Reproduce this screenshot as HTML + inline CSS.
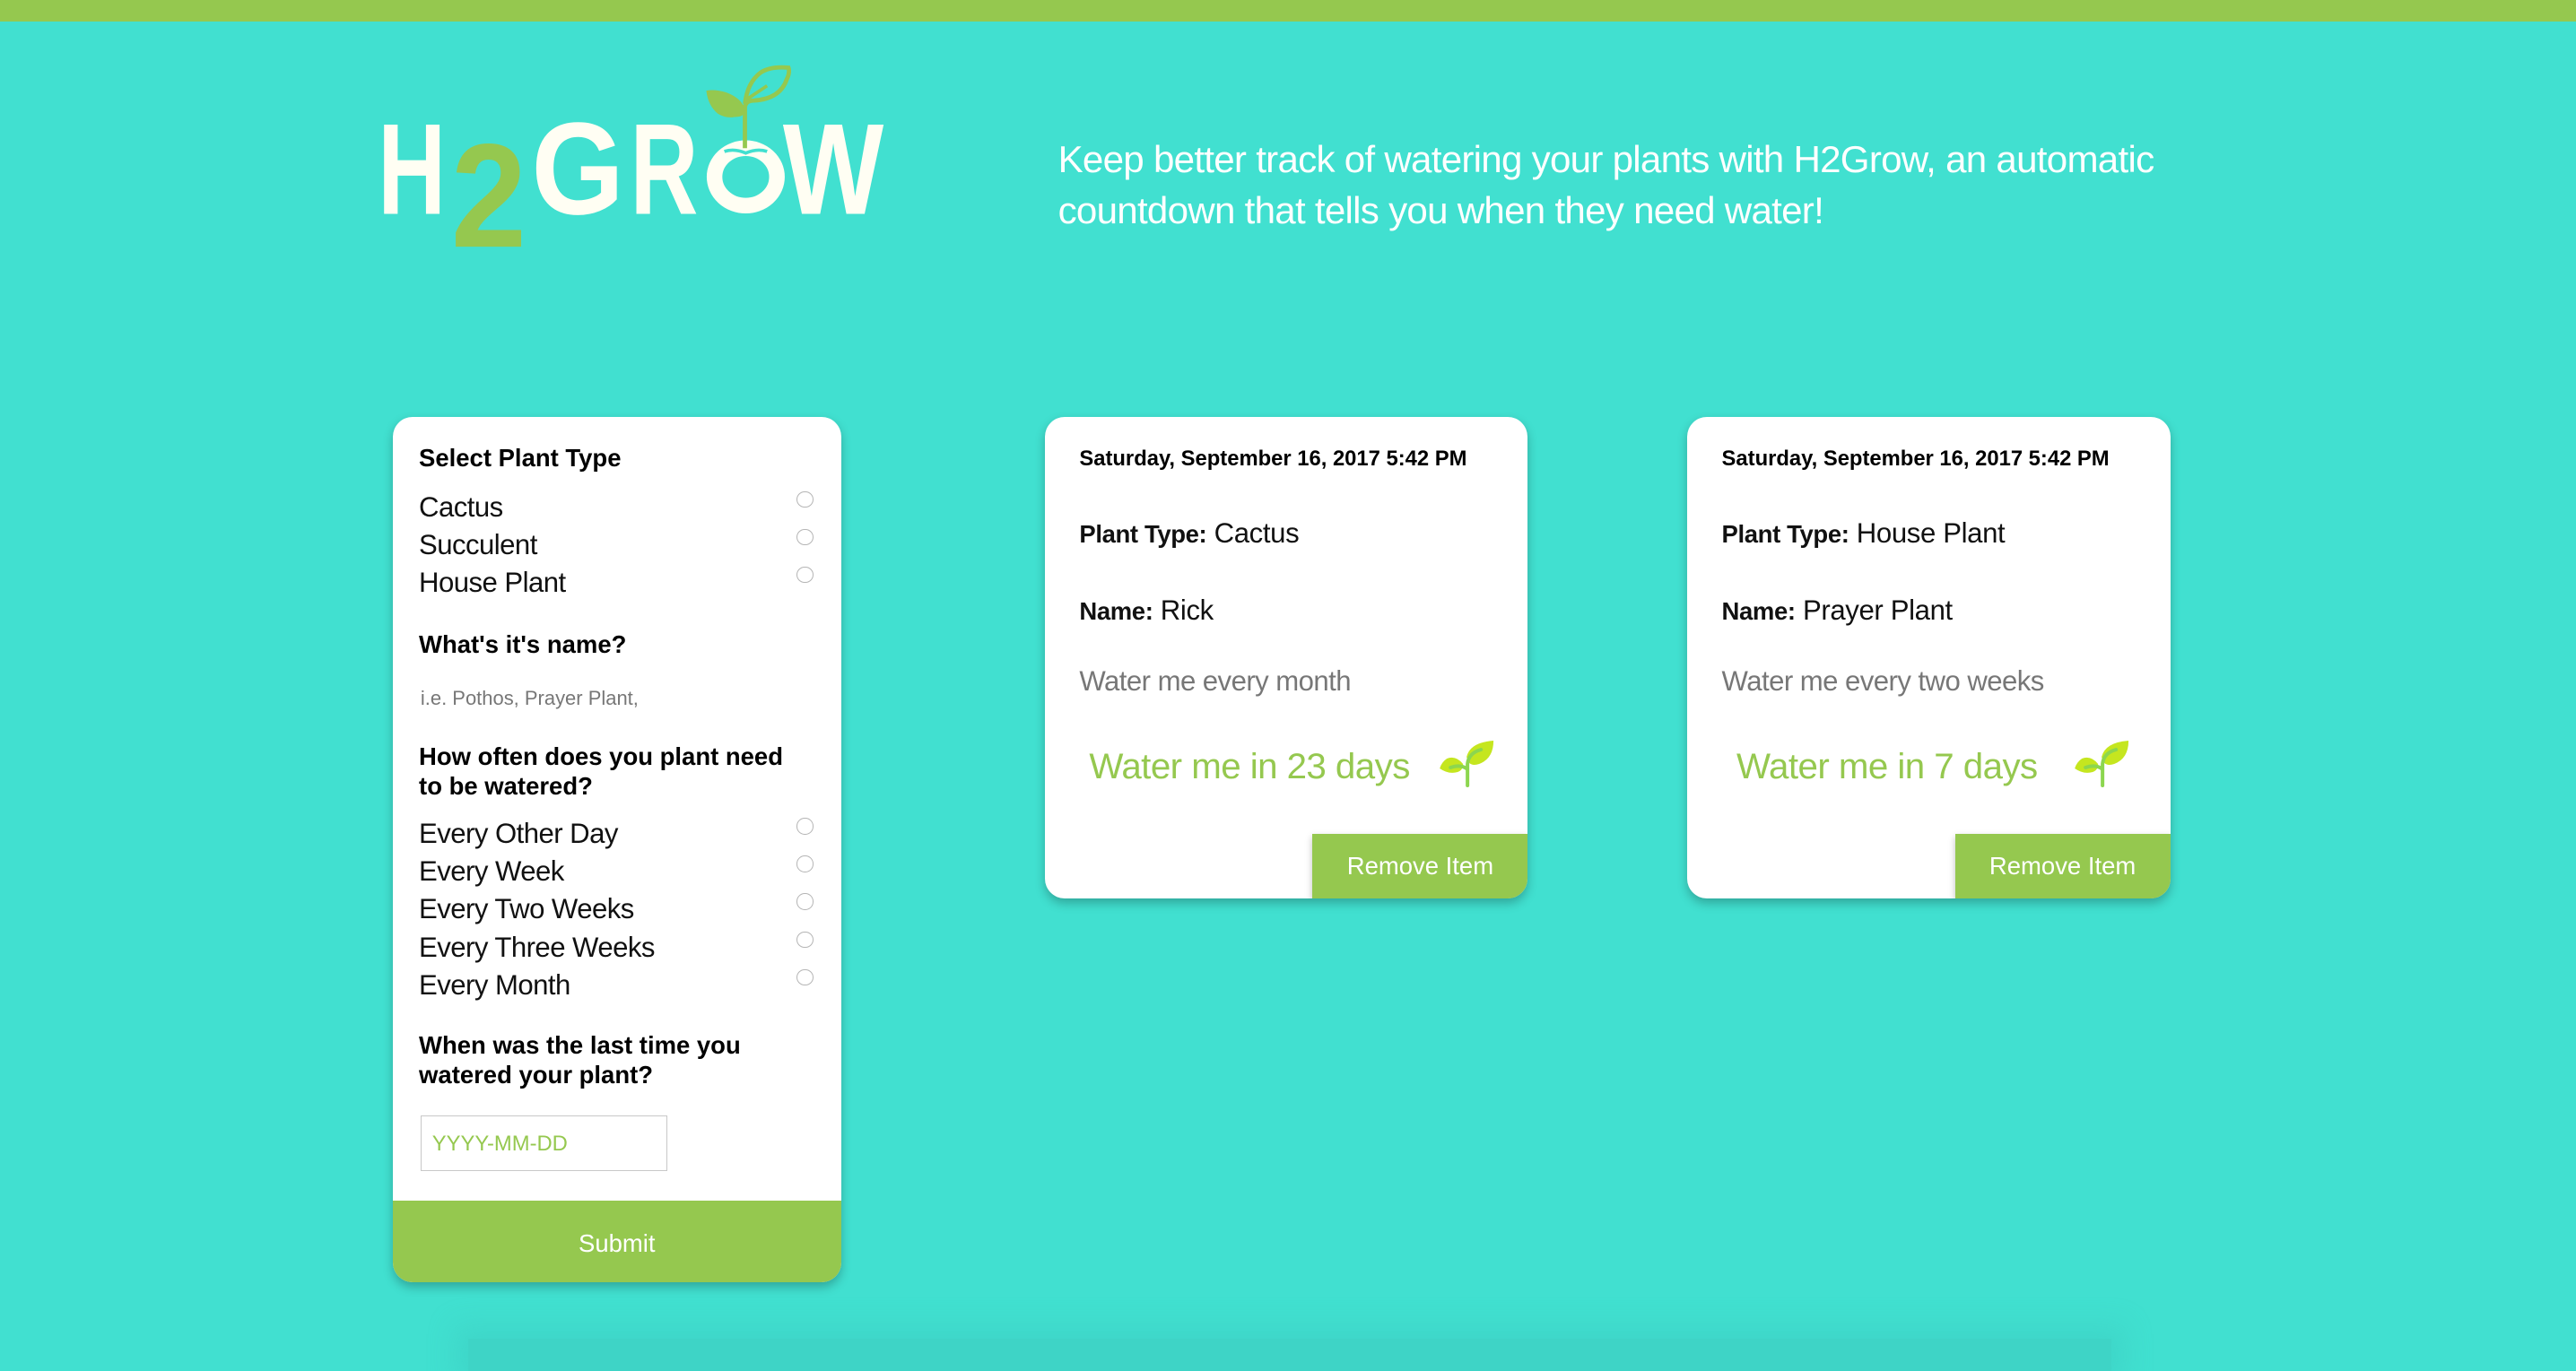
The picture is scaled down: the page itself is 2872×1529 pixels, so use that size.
<!DOCTYPE html>
<html><head><meta charset="utf-8"><style>
html,body{margin:0;padding:0;}
body{width:2872px;height:1500px;overflow:hidden;background:#41e0d0;font-family:"Liberation Sans",sans-serif;}
#w{position:relative;width:1568px;height:819px;zoom:1.83163;}
.a{position:absolute;}
.top{left:0;top:0;width:1568px;height:13px;background:#95c84f;}
.card{background:#fff;border-radius:12px;box-shadow:0 3px 6px rgba(0,0,0,.25);overflow:hidden;}
.h{font-weight:bold;font-size:15px;color:#000;}
.o{font-size:17px;color:#111;letter-spacing:-0.3px;}
.r{width:9px;height:9px;border:1px solid #b5b5b5;border-radius:50%;background:#fff;}
.date{font-weight:bold;font-size:13px;color:#000;}
.pl{font-size:17px;color:#111;letter-spacing:-0.2px;}
.pl b{font-size:15px;}
.ev{font-size:17px;color:#777;letter-spacing:-0.3px;}
.wm{font-size:22px;color:#95c84f;letter-spacing:-0.3px;}
.btn{background:#95c84f;color:#fff;font-size:15px;text-align:center;line-height:39px;box-shadow:0 2px 4px rgba(0,0,0,.25);}
</style></head><body><div id="w">
<div class="a top"></div>
<svg class="a" style="left:225px;top:38px" width="320" height="115" viewBox="0 0 320 115">
 <text x="5" y="92" font-family="Liberation Sans" font-weight="bold" font-size="79" fill="#fffef3" textLength="41.5" lengthAdjust="spacingAndGlyphs">H</text>
 <text x="49.6" y="112" font-family="Liberation Sans" font-weight="bold" font-size="90" fill="#95c84f" textLength="46" lengthAdjust="spacingAndGlyphs">2</text>
 <text x="98.5" y="92" font-family="Liberation Sans" font-weight="bold" font-size="80" fill="#fffef3" textLength="56.5" lengthAdjust="spacingAndGlyphs">G</text>
 <text x="158.6" y="92" font-family="Liberation Sans" font-weight="bold" font-size="79" fill="#fffef3" textLength="41.5" lengthAdjust="spacingAndGlyphs">R</text>
 <ellipse cx="229" cy="69.5" rx="19" ry="17.5" fill="none" stroke="#fffef3" stroke-width="9.5"/>
 <path d="M216 54 Q222 52 229 55 Q236 52 242 54" stroke="#41e0d0" stroke-width="2" fill="none"/>
 <text x="251.6" y="92" font-family="Liberation Sans" font-weight="bold" font-size="79" fill="#fffef3" textLength="61.4" lengthAdjust="spacingAndGlyphs">W</text>
 <path d="M228.5 52 L228.5 27 Q229 23 234 23 Q250 22 254 10 Q256 6 255 3 Q244 2 238 6 Q230 12 228.5 25" stroke="#95c84f" stroke-width="2.6" fill="none"/>
 <path d="M230 22 L242 14" stroke="#95c84f" stroke-width="2" fill="none"/>
 <path d="M227.5 26 Q225 21 217 18 Q210 16 205 17 Q206 26 212 31 Q217 34 222 33 Q228 33 228 30Z" fill="#95c84f"/>
</svg>
<div class="a" style="left:644px;top:82px;font-size:23px;line-height:31px;color:#fff;letter-spacing:-0.4px;width:720px;">Keep better track of watering your plants with H2Grow, an automatic countdown that tells you when they need water!</div>

<div class="a card" style="left:239px;top:254px;width:273px;height:527px;">
 <div class="a h" style="left:16px;top:16px;">Select Plant Type</div>
 <div class="a o" style="left:16px;top:45px;">Cactus</div>
 <div class="a o" style="left:16px;top:68px;">Succulent</div>
 <div class="a o" style="left:16px;top:91px;">House Plant</div>
 <div class="a r" style="left:246px;top:45px;"></div>
 <div class="a r" style="left:246px;top:68px;"></div>
 <div class="a r" style="left:246px;top:91px;"></div>
 <div class="a h" style="left:16px;top:130px;">What's it's name?</div>
 <div class="a" style="left:17px;top:164px;font-size:12px;color:#777;">i.e. Pothos, Prayer Plant,</div>
 <div class="a h" style="left:16px;top:198px;line-height:18px;width:228px;">How often does you plant need to be watered?</div>
 <div class="a o" style="left:16px;top:244px;">Every Other Day</div>
 <div class="a o" style="left:16px;top:267px;">Every Week</div>
 <div class="a o" style="left:16px;top:290px;">Every Two Weeks</div>
 <div class="a o" style="left:16px;top:313px;">Every Three Weeks</div>
 <div class="a o" style="left:16px;top:336px;">Every Month</div>
 <div class="a r" style="left:246px;top:244px;"></div>
 <div class="a r" style="left:246px;top:267px;"></div>
 <div class="a r" style="left:246px;top:290px;"></div>
 <div class="a r" style="left:246px;top:313px;"></div>
 <div class="a r" style="left:246px;top:336px;"></div>
 <div class="a h" style="left:16px;top:374px;line-height:18px;width:240px;">When was the last time you watered your plant?</div>
 <div class="a" style="left:17px;top:425px;width:149px;height:33px;border:1px solid #c8c8c8;"></div>
 <div class="a" style="left:24px;top:435px;font-size:13px;color:#95c84f;">YYYY-MM-DD</div>
 <div class="a" style="left:0;top:477px;width:273px;height:50px;background:#95c84f;color:#fff;font-size:15px;text-align:center;line-height:52px;">Submit</div>
</div>

<div class="a card" style="left:636px;top:254px;width:294px;height:293px;">
 <div class="a date" style="left:21px;top:18px;">Saturday, September 16, 2017 5:42 PM</div>
 <div class="a pl" style="left:21px;top:61px;"><b>Plant Type:</b> Cactus</div>
 <div class="a pl" style="left:21px;top:108px;"><b>Name:</b> Rick</div>
 <div class="a ev" style="left:21px;top:151px;">Water me every month</div>
 <div class="a wm" style="left:27px;top:200px;">Water me in 23 days</div>
 <svg class="a" style="left:240px;top:196px" width="34" height="30" viewBox="0 0 60 55"><path d="M26 28 Q18 18 8 22 Q2 26 0 33 Q10 40 20 37 Q26 35 26 28Z" fill="#c5e61f"/><path d="M30 20 Q34 4 60 2 Q60 22 44 28 Q32 32 30 20Z" fill="#c5e61f"/><path d="M31 52 L31 28 Q32 16 46 12 M31 34 Q24 28 12 32" stroke="#8cd64f" stroke-width="4" fill="none" stroke-linecap="round"/></svg>
 <div class="a btn" style="left:163px;top:254px;width:131px;height:39px;">Remove Item</div>
</div>

<div class="a card" style="left:1027px;top:254px;width:294px;height:293px;">
 <div class="a date" style="left:21px;top:18px;">Saturday, September 16, 2017 5:42 PM</div>
 <div class="a pl" style="left:21px;top:61px;"><b>Plant Type:</b> House Plant</div>
 <div class="a pl" style="left:21px;top:108px;"><b>Name:</b> Prayer Plant</div>
 <div class="a ev" style="left:21px;top:151px;">Water me every two weeks</div>
 <div class="a wm" style="left:30px;top:200px;">Water me in 7 days</div>
 <svg class="a" style="left:235px;top:196px" width="34" height="30" viewBox="0 0 60 55"><path d="M26 28 Q18 18 8 22 Q2 26 0 33 Q10 40 20 37 Q26 35 26 28Z" fill="#c5e61f"/><path d="M30 20 Q34 4 60 2 Q60 22 44 28 Q32 32 30 20Z" fill="#c5e61f"/><path d="M31 52 L31 28 Q32 16 46 12 M31 34 Q24 28 12 32" stroke="#8cd64f" stroke-width="4" fill="none" stroke-linecap="round"/></svg>
 <div class="a btn" style="left:163px;top:254px;width:131px;height:39px;">Remove Item</div>
</div>

<div class="a" style="left:285px;top:815px;width:1000px;height:20px;background:#3ed4c6;box-shadow:0 0 16px 8px rgba(60,200,190,.4);"></div>
</div></body></html>
